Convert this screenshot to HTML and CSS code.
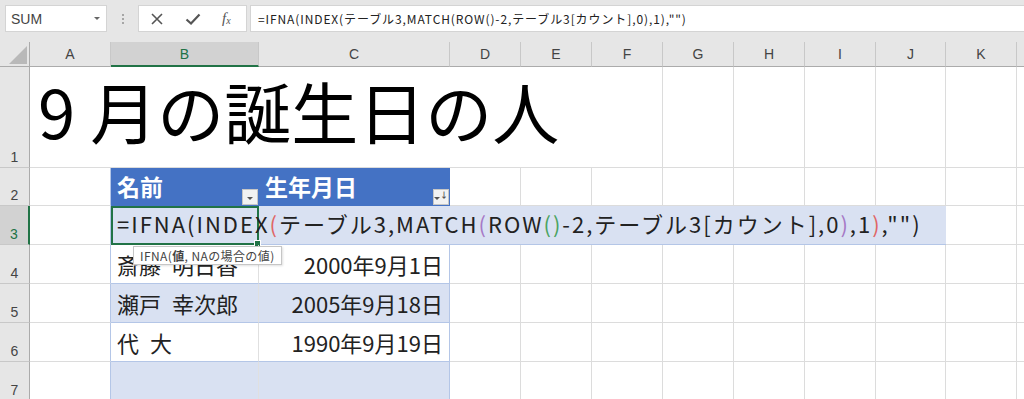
FILE: index.html
```html
<!DOCTYPE html>
<html>
<head>
  <title>9月の誕生日の人</title>
  <link rel="stylesheet" href="styles.css">
</head>
<body>
  <div class="topbar">
    <div class="namebox">
      <span>SUM</span>
      <span class="caret"></span>
    </div>
    <div class="grip"><i></i><i></i><i></i></div>
    <div class="fbtns">
      <svg class="ico" width="14" height="14" viewBox="0 0 14 14"><path d="M2 2 L12 12 M12 2 L2 12" stroke="#555" stroke-width="1.6" fill="none"/></svg>
      <svg class="ico" width="16" height="14" viewBox="0 0 16 14"><path d="M1.5 7.5 L6 11.5 L14.5 2.5" stroke="#555" stroke-width="2.2" fill="none"/></svg>
      <span class="fx">f<sub>x</sub></span>
    </div>
    <div class="formula">=IFNA(INDEX(テーブル3,MATCH(ROW()-2,テーブル3[カウント],0),1),"")</div>
  </div>

  <div class="sheet">
    <div class="corner"><svg width="18" height="18" viewBox="0 0 18 18"><path d="M18 0 L18 18 L0 18 Z" fill="#b9b9b9"/></svg></div>
    <div class="ch">A</div>
    <div class="ch sel">B</div>
    <div class="ch">C</div>
    <div class="ch">D</div>
    <div class="ch">E</div>
    <div class="ch">F</div>
    <div class="ch">G</div>
    <div class="ch">H</div>
    <div class="ch">I</div>
    <div class="ch">J</div>
    <div class="ch">K</div>
    <div class="ch last"></div>

    <!-- row 1 -->
    <div class="rh">1</div>
    <div class="c title">9 月の誕生日の人</div>
    <div class="c"></div><div class="c"></div><div class="c"></div>
    <div class="c"></div><div class="c"></div><div class="c"></div>
    <div class="c last"></div>

    <!-- row 2 -->
    <div class="rh">2</div>
    <div class="c edge"></div>
    <div class="c th">名前<span class="dd"><b></b></span></div>
    <div class="c th thc">生年月日<span class="dd"><b></b><em>↓</em></span></div>
    <div class="c"></div><div class="c"></div><div class="c"></div><div class="c"></div>
    <div class="c"></div><div class="c"></div><div class="c"></div><div class="c"></div>
    <div class="c last"></div>

    <!-- row 3 (editing) -->
    <div class="rh on">3</div>
    <div class="c edge"></div>
    <div class="c edit">
      <span class="active"><span class="handle"></span></span>
      <span class="ftext">=IFNA(INDEX<span class="p1">(</span>テーブル3,MATCH<span class="p2">(</span>ROW<span class="p3">()</span>-2,テーブル3[カウント],0<span class="p2">)</span>,1<span class="p1">)</span>,"")</span>
      <div class="tip">IFNA(<b>値</b>, NAの場合の値)</div>
    </div>
    <div class="c"></div>
    <div class="c last"></div>

    <!-- row 4 -->
    <div class="rh">4</div>
    <div class="c edge"></div>
    <div class="c tb name">斎藤 明日香</div>
    <div class="c tb num">2000年9月1日</div>
    <div class="c"></div><div class="c"></div><div class="c"></div><div class="c"></div>
    <div class="c"></div><div class="c"></div><div class="c"></div><div class="c"></div>
    <div class="c last"></div>

    <!-- row 5 -->
    <div class="rh">5</div>
    <div class="c edge"></div>
    <div class="c tb band name">瀬戸 幸次郎</div>
    <div class="c tb band num">2005年9月18日</div>
    <div class="c"></div><div class="c"></div><div class="c"></div><div class="c"></div>
    <div class="c"></div><div class="c"></div><div class="c"></div><div class="c"></div>
    <div class="c last"></div>

    <!-- row 6 -->
    <div class="rh">6</div>
    <div class="c edge"></div>
    <div class="c tb name">代 大</div>
    <div class="c tb num">1990年9月19日</div>
    <div class="c"></div><div class="c"></div><div class="c"></div><div class="c"></div>
    <div class="c"></div><div class="c"></div><div class="c"></div><div class="c"></div>
    <div class="c last"></div>

    <!-- row 7 -->
    <div class="rh">7</div>
    <div class="c edge"></div>
    <div class="c tb band"></div>
    <div class="c tb band num"></div>
    <div class="c"></div><div class="c"></div><div class="c"></div><div class="c"></div>
    <div class="c"></div><div class="c"></div><div class="c"></div><div class="c"></div>
    <div class="c last"></div>
  </div>
</body>
</html>
```

FILE: styles.css
```css
body {
  margin: 0;
  padding: 0;
  font-family: "Noto Sans CJK JP", "Noto Sans", sans-serif;
  background-color: #fff;
  overflow: hidden;
}

/* formula bar */
.topbar {
  height: 42px;
  background-color: #e6e6e6;
  display: flex;
  align-items: flex-start;
  padding-top: 5px;
  box-sizing: border-box;
}

.namebox {
  margin-left: 5px;
  width: 102px;
  height: 27px;
  background: #fff;
  border: 1px solid #d4d4d4;
  box-sizing: border-box;
  display: flex;
  align-items: center;
  justify-content: space-between;
  padding: 0 6px 0 5px;
  font-family: "Liberation Sans", sans-serif;
  font-size: 14px;
  color: #444;
}

.caret {
  width: 0;
  height: 0;
  border-left: 3px solid transparent;
  border-right: 3px solid transparent;
  border-top: 3px solid #666;
}

.grip {
  width: 31px;
  height: 27px;
  display: flex;
  flex-direction: column;
  align-items: center;
  justify-content: center;
  gap: 2px;
}

.grip i {
  width: 2px;
  height: 2px;
  background: #a6a6a6;
}

.fbtns {
  width: 109px;
  height: 27px;
  background: #fff;
  border: 1px solid #d4d4d4;
  box-sizing: border-box;
  display: flex;
  align-items: center;
  padding-left: 11px;
  gap: 21px;
}

.fx {
  font-family: "Liberation Serif", serif;
  font-style: italic;
  font-size: 15px;
  color: #555;
  line-height: 1;
}

.fx sub {
  font-size: 10px;
  vertical-align: -1px;
}

.formula {
  flex: 1;
  margin-left: 3px;
  height: 27px;
  background: #fff;
  border: 1px solid #d4d4d4;
  border-right: none;
  box-sizing: border-box;
  padding-left: 7px;
  font-size: 12px;
  letter-spacing: 0.9px;
  line-height: 25px;
  color: #222;
  white-space: nowrap;
}

/* sheet */
.sheet {
  display: grid;
  grid-template-columns: 30px 81px 148px 191px repeat(6, 71px) 70px 71px 1fr;
  grid-template-rows: 25px 101px 38px repeat(5, 39px);
}

.corner {
  background: #e6e6e6;
  border-right: 1px solid #ababab;
  border-bottom: 1px solid #ababab;
  box-sizing: border-box;
  display: flex;
  align-items: flex-end;
  justify-content: flex-end;
  padding: 0 2px 2px 0;
}

.ch {
  background: #e6e6e6;
  border-right: 1px solid #c8c8c8;
  border-bottom: 1px solid #ababab;
  box-sizing: border-box;
  display: flex;
  align-items: center;
  justify-content: center;
  font-family: "Liberation Sans", sans-serif;
  font-size: 14px;
  color: #444;
}

.ch.sel {
  background: #d2d2d2;
  color: #217346;
  border-bottom: 2px solid #217346;
}

.ch.last {
  border-right: none;
}

.rh {
  background: #e6e6e6;
  border-right: 1px solid #ababab;
  border-bottom: 1px solid #c8c8c8;
  box-sizing: border-box;
  display: flex;
  align-items: flex-end;
  justify-content: center;
  padding-bottom: 2px;
  font-family: "Liberation Sans", sans-serif;
  font-size: 14px;
  color: #444;
}

.rh.on {
  background: #d2d2d2;
  color: #217346;
  border-right: 2px solid #217346;
}

.c {
  border-right: 1px solid #dcdcdc;
  border-bottom: 1px solid #dcdcdc;
  box-sizing: border-box;
  position: relative;
  font-size: 22px;
  color: #222;
  white-space: nowrap;
  display: flex;
  align-items: center;
  padding-left: 6px;
}

.c.last {
  border-right: none;
}

.title {
  grid-column: span 5;
  font-size: 67px;
  color: #000;
  align-items: flex-start;
  padding-top: 3px;
  padding-left: 8px;
  line-height: 1.2;
  border-right: none;
}

.edge {
  border-right-color: #b4c6e7;
}

.th {
  background: #4472c4;
  color: #fff;
  font-size: 23px;
  font-weight: bold;
  border-right: none;
  border-bottom: none;
  padding-bottom: 3px;
}

.thc {
  border-right: 1px solid #4472c4;
}

.dd {
  position: absolute;
  right: 1px;
  bottom: 1px;
  width: 16px;
  height: 16px;
  background: #f2f2f2;
  border: 1px solid #c6c6c6;
  box-sizing: border-box;
  display: flex;
  align-items: center;
  justify-content: center;
}

.thc .dd {
  right: 0;
}

.dd b {
  width: 0;
  height: 0;
  border-left: 3px solid transparent;
  border-right: 3px solid transparent;
  border-top: 3px solid #555;
  margin-top: 3px;
}

.dd em {
  font-style: normal;
  font-size: 8px;
  line-height: 1;
  color: #555;
  margin-top: -4px;
}

.edit {
  grid-column: span 9;
  background: #d9e1f2;
  border-right: none;
  border-bottom-color: #b4c6e7;
  padding-bottom: 4px;
  overflow: visible;
}

.active {
  position: absolute;
  left: 0;
  top: 0;
  width: 148px;
  height: 39px;
  border: 2px solid #217346;
  box-sizing: border-box;
}

.handle {
  position: absolute;
  right: -4px;
  bottom: -4px;
  width: 5px;
  height: 5px;
  background: #217346;
  border: 1px solid #fff;
}

.ftext {
  position: relative;
  color: #222;
  letter-spacing: 2px;
}

.p1 { color: #e06666; }
.p2 { color: #a679c6; }
.p3 { color: #4aa361; }

.tip {
  position: absolute;
  left: 22px;
  top: 40px;
  z-index: 3;
  background: #fff;
  border: 1px solid #c6c6c6;
  box-shadow: 1px 1px 2px rgba(0, 0, 0, 0.12);
  font-size: 12px;
  letter-spacing: 0.4px;
  line-height: 17px;
  padding: 0 6px;
  color: #444;
}

.tb {
  border-bottom-color: #b4c6e7;
  border-right-color: #e0e0e0;
}

.name {
  word-spacing: 6px;
}

.tb.num {
  justify-content: flex-end;
  padding-right: 6px;
  border-right-color: #b4c6e7;
}

.band {
  background: #d9e1f2;
}
```
